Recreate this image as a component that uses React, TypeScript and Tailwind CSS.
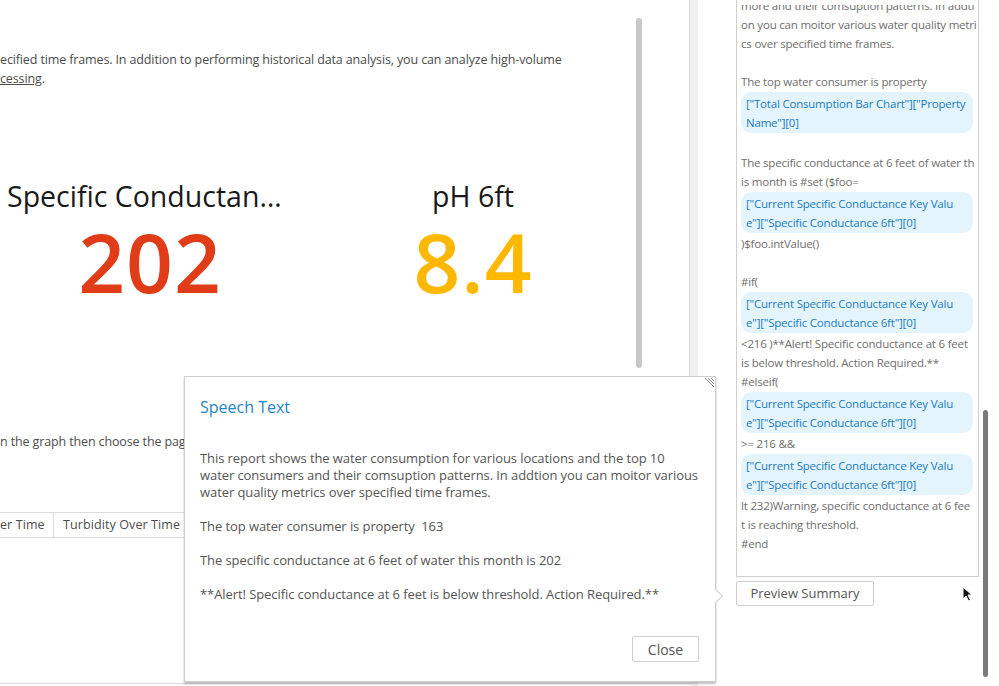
const FONT = "font-['Open_Sans','Noto_Sans',sans-serif]";

type Line = { text: string; chip?: false } | { chip: true; lines: string[] };

const summary: (Line | null)[] = [
  { text: 'more and their comsuption patterns. In addti' },
  { text: 'on you can moitor various water quality metri' },
  { text: 'cs over specified time frames.' },
  null,
  { text: 'The top water consumer is property' },
  { chip: true, lines: ['["Total Consumption Bar Chart"]["Property', 'Name"][0]'] },
  null,
  { text: 'The specific conductance at 6 feet of water th' },
  { text: 'is month is #set ($foo=' },
  { chip: true, lines: ['["Current Specific Conductance Key Valu', 'e"]["Specific Conductance 6ft"][0]'] },
  { text: ')$foo.intValue()' },
  null,
  { text: '#if(' },
  { chip: true, lines: ['["Current Specific Conductance Key Valu', 'e"]["Specific Conductance 6ft"][0]'] },
  { text: '<216 )**Alert! Specific conductance at 6 feet' },
  { text: 'is below threshold. Action Required.**' },
  { text: '#elseif(' },
  { chip: true, lines: ['["Current Specific Conductance Key Valu', 'e"]["Specific Conductance 6ft"][0]'] },
  { text: '>= 216 &&' },
  { chip: true, lines: ['["Current Specific Conductance Key Valu', 'e"]["Specific Conductance 6ft"][0]'] },
  { text: 'lt 232)Warning, specific conductance at 6 fee' },
  { text: 't is reaching threshold.' },
  { text: '#end' },
];

export default function App() {
  return (
    <div className={`relative flex h-[686px] w-[999px] overflow-hidden bg-white ${FONT}`}>
      <ReportPanel />
      <div className="w-[8px] shrink-0 bg-[#f1f1f1]" />
      <SummaryPanel />
      <SpeechDialog />
    </div>
  );
}

function ReportPanel() {
  return (
    <div className="flex h-[684px] w-[690px] shrink-0 border-r border-b border-[#dcdcdc]">
      <div className="flex w-[636px] shrink-0 flex-col overflow-hidden">
        <div className="pt-[50px] text-[12.5px] leading-[19px] tracking-[-0.13px] text-[#4c4c4c] whitespace-nowrap">
          <p>ecified time frames. In addition to performing historical data analysis, you can analyze high-volume</p>
          <p>
            <span className="underline">cessing</span>.
          </p>
        </div>

        <div className="mt-[90px] flex gap-[23px]">
          <Metric title="Specific Conductance Key Value" value="202" color="text-[#e03c17]" />
          <Metric title="pH 6ft" value="8.4" color="text-[#ffb800]" />
        </div>

        <p className="mt-[130px] text-[12.5px] leading-[19px] tracking-[-0.13px] text-[#4c4c4c] whitespace-nowrap">
          n the graph then choose the page you want to view
        </p>

        <div className="mt-[61px] flex h-[26px] border-y border-[#dcdcdc] text-[12.5px] leading-[24px] tracking-[0.1px] text-[#4c4c4c] whitespace-nowrap">
          <div className="w-[54px] border-r border-[#dcdcdc]">er Time</div>
          <div className="border-r border-[#dcdcdc] px-[9px]">Turbidity Over Time</div>
          <div className="px-[9px]">Temperature Over Time</div>
        </div>
      </div>
      <div className="mt-[18px] h-[350px] w-[6px] rounded-full bg-[#c8c8c8]" />
    </div>
  );
}

function Metric({ title, value, color }: { title: string; value: string; color: string }) {
  return (
    <div className="flex w-[300px] flex-col items-center">
      <div className="w-full truncate px-[7px] text-center text-[28.5px] font-medium leading-[36px] text-[#1a1a1a]">
        {title}
      </div>
      <div className={`mt-[6px] text-[82px] font-semibold leading-[82px] tracking-[1px] ${color}`}>{value}</div>
    </div>
  );
}

function SummaryPanel() {
  return (
    <div className="relative flex flex-1">
      <div className="ml-[38px] flex w-[243px] shrink-0 flex-col">
        <div className="h-[577px] border-x border-b border-[#cfcfcf] pt-[5px]">
          <div className="h-full overflow-hidden pl-[4px] pr-[5px] text-[11.5px] leading-[19px] tracking-[-0.2px] text-[#6e6e6e]">
            <div className="-mt-[9px] whitespace-nowrap">
              {summary.map((item, i) =>
                item === null ? (
                  <div key={i} className="h-[19px]" />
                ) : item.chip ? (
                  <div key={i} className="my-px rounded-[10px] bg-[#e3f4fd] px-[5px] py-[1.5px] text-[#1b7cc0]">
                    {item.lines.map((l) => (
                      <div key={l}>{l}</div>
                    ))}
                  </div>
                ) : (
                  <div key={i}>{item.text}</div>
                ),
              )}
            </div>
          </div>
        </div>
        <button className="mt-[4px] h-[25px] w-[138px] rounded-[2px] border border-[#cfcfcf] text-[13px] text-[#555]">
          Preview Summary
        </button>
      </div>
      <div className="ml-[4px] mt-[410px] h-[267px] w-[5px] rounded-full bg-[#7b7b7b]" />
      <svg className="absolute left-[264px] top-[586px]" width="11" height="16" viewBox="0 0 11 16">
        <path d="M1 1 L1 13 L4 10 L6.5 15 L8.5 14 L6 9 L10 9 Z" fill="#111" stroke="#fff" strokeWidth="1" />
      </svg>
    </div>
  );
}

function SpeechDialog() {
  return (
    <div className="absolute left-[184px] top-[376px] flex h-[306px] w-[532px] flex-col border border-[#cfcfcf] bg-white px-[15px] pt-[19px] shadow-[0_2px_2px_rgba(0,0,0,0.25)]">
      <svg className="absolute right-[1px] top-[1px]" width="9" height="9" viewBox="0 0 9 9">
        <path d="M0 0 L9 9 M3 0 L9 6 M6 0 L9 3" stroke="#8a8a8a" strokeWidth="1" />
      </svg>
      <div className="absolute left-[526px] top-[214px] h-[10px] w-[10px] rotate-45 border-t border-r border-[#cfcfcf] bg-white" />
      <h2 className="text-[16px] leading-[22px] text-[#1e85c8]">Speech Text</h2>
      <div className="mt-[32px] text-[13px] leading-[17px] tracking-[-0.08px] text-[#555] whitespace-nowrap">
        <p>
          This report shows the water consumption for various locations and the top 10
          <br />
          water consumers and their comsuption patterns. In addtion you can moitor various
          <br />
          water quality metrics over specified time frames.
        </p>
        <p className="mt-[17px]">The top water consumer is property&nbsp; 163</p>
        <p className="mt-[17px]">The specific conductance at 6 feet of water this month is 202</p>
        <p className="mt-[17px]">**Alert! Specific conductance at 6 feet is below threshold. Action Required.**</p>
      </div>
      <div className="mt-auto mb-[19px] flex justify-end pr-[1px]">
        <button className="h-[26px] w-[67px] rounded-[2px] border border-[#cfcfcf] text-[14px] text-[#555]">Close</button>
      </div>
    </div>
  );
}
